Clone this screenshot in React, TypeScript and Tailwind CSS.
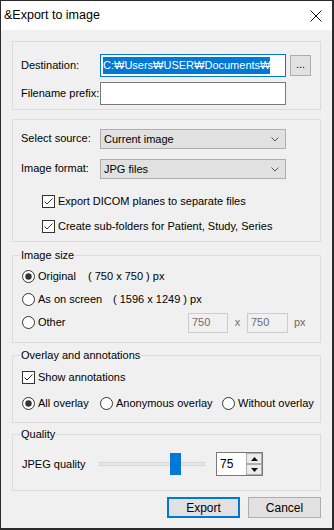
import type { ReactNode } from "react";

const font = "font-['Liberation_Sans','Noto_Sans_CJK_KR',Arial,sans-serif]";

function GroupBox({
  title,
  className,
  children,
}: {
  title?: string;
  className: string;
  children: ReactNode;
}) {
  return (
    <div className={`relative w-[309px] border border-[#dcdcdc] ${className}`}>
      {title && (
        <span className="absolute -top-[8px] left-[7px] bg-[#f0f0f0] px-px leading-[14px]">
          {title}
        </span>
      )}
      {children}
    </div>
  );
}

function Radio({ checked = false }: { checked?: boolean }) {
  return (
    <svg width="13" height="13" viewBox="0 0 13 13" className="shrink-0">
      <circle cx="6.5" cy="6.5" r="6" fill="#fff" stroke="#333" strokeWidth="1" />
      {checked && <circle cx="6.5" cy="6.5" r="3.2" fill="#333" />}
    </svg>
  );
}

function Check() {
  return (
    <svg width="13" height="13" viewBox="0 0 13 13" className="shrink-0">
      <rect x="0.5" y="0.5" width="12" height="12" fill="#fff" stroke="#333" />
      <polyline points="2.5,6.5 5,9 10.5,3.5" fill="none" stroke="#333" strokeWidth="1" />
    </svg>
  );
}

function Combo({ value }: { value: string }) {
  return (
    <div className="flex h-[20px] w-[186px] items-center justify-between border border-[#adadad] bg-[#e1e1e1] pl-[3px] pr-[6px]">
      <span>{value}</span>
      <svg width="8" height="5" viewBox="0 0 8 5">
        <polyline points="0.5,0.5 4,4 7.5,0.5" fill="none" stroke="#555" strokeWidth="1" />
      </svg>
    </div>
  );
}

function Button({ label, primary = false }: { label: string; primary?: boolean }) {
  return (
    <button
      className={`flex h-[21px] w-[73px] items-center justify-center bg-[#e1e1e1] ${
        primary ? "border-2 border-[#0078d7]" : "border border-[#adadad]"
      }`}
    >
      {label}
    </button>
  );
}

export default function App() {
  return (
    <div
      className={`flex h-[530px] w-[334px] flex-col border-t border-l border-r-2 border-b-2 border-[#2b2b2b] bg-[#f0f0f0] text-[11px] text-black ${font}`}
    >
      {/* title bar */}
      <div className="flex h-[29px] shrink-0 items-center justify-between bg-white pl-[3px] pr-[10px]">
        <span className="text-[12.5px]">&amp;Export to image</span>
        <svg width="12" height="12" viewBox="0 0 12 12">
          <path d="M0.5 0.5 L11.5 11.5 M11.5 0.5 L0.5 11.5" stroke="#111" strokeWidth="1" />
        </svg>
      </div>

      <div className="ml-[11px] flex flex-col">
        {/* destination */}
        <GroupBox className="mt-[11px] pt-[12px] pb-[4px] pl-[8px]">
          <div className="flex h-[23px] items-center">
            <span className="w-[79px]">Destination:</span>
            <div className="flex h-[23px] w-[186px] items-center border border-[#0078d7] bg-white pl-[2px]">
              <span className="bg-[#0078d7] leading-[17px] text-white">C:₩Users₩USER₩Documents₩</span>
            </div>
            <div className="ml-[4px] flex h-[21px] w-[21px] items-center justify-center border border-[#adadad] bg-[#e1e1e1] pb-[3px] leading-none">
              ...
            </div>
          </div>
          <div className="mt-[5px] flex h-[23px] items-center">
            <span className="w-[79px]">Filename prefix:</span>
            <div className="h-[23px] w-[186px] border border-[#7a7a7a] bg-white" />
          </div>
        </GroupBox>

        {/* source / format */}
        <GroupBox className="mt-[9px] pt-[9px] pb-[6px] pl-[8px]">
          <div className="flex h-[20px] items-center">
            <span className="w-[79px] -mt-px">Select source:</span>
            <Combo value="Current image" />
          </div>
          <div className="mt-[10px] flex h-[20px] items-center">
            <span className="w-[79px] -mt-px">Image format:</span>
            <Combo value="JPG files" />
          </div>
          <div className="mt-[14px] ml-[21px] flex h-[17px] items-center gap-[3px]">
            <Check />
            <span>Export DICOM planes to separate files</span>
          </div>
          <div className="mt-[8px] ml-[21px] flex h-[17px] items-center gap-[3px]">
            <Check />
            <span>Create sub-folders for Patient, Study, Series</span>
          </div>
        </GroupBox>

        {/* image size */}
        <GroupBox title="Image size" className="mt-[13px] pt-[9px] pb-[8px] pl-[9px]">
          <div className="flex h-[23px] items-center">
            <Radio checked />
            <span className="ml-[3px] w-[50px]">Original</span>
            <span>( 750 x 750 ) px</span>
          </div>
          <div className="flex h-[23px] items-center">
            <Radio />
            <span className="ml-[3px] w-[75px]">As on screen</span>
            <span>( 1596 x 1249 ) px</span>
          </div>
          <div className="flex h-[23px] items-center">
            <Radio />
            <span className="ml-[3px] w-[150px]">Other</span>
            <div className="flex h-[20px] w-[40px] items-center border border-[#cccccc] pl-[3px] text-[#6d6d6d]">
              750
            </div>
            <span className="w-[19px] text-center text-[#6d6d6d]">x</span>
            <div className="flex h-[20px] w-[41px] items-center border border-[#cccccc] pl-[3px] text-[#6d6d6d]">
              750
            </div>
            <span className="ml-[6px] text-[#6d6d6d]">px</span>
          </div>
        </GroupBox>

        {/* overlay */}
        <GroupBox title="Overlay and annotations" className="mt-[12px] pt-[10px] pb-[7px] pl-[9px]">
          <div className="flex h-[23px] items-center gap-[3px]">
            <Check />
            <span>Show annotations</span>
          </div>
          <div className="mt-[3px] flex h-[23px] items-center">
            <Radio checked />
            <span className="ml-[3px] w-[62px]">All overlay</span>
            <Radio />
            <span className="ml-[3px] w-[106px]">Anonymous overlay</span>
            <Radio />
            <span className="ml-[3px]">Without overlay</span>
          </div>
        </GroupBox>

        {/* quality */}
        <GroupBox title="Quality" className="mt-[11px] pt-[17px] pb-[14px] pl-[9px]">
          <div className="flex h-[24px] items-center">
            <span className="w-[77px]">JPEG quality</span>
            <div className="relative flex h-[24px] w-[106px] items-center">
              <div className="h-[4px] w-full border border-[#d6d6d6] bg-[#e7e7e7]" />
              <div className="absolute top-[1px] left-[71px] h-[22px] w-[11px] bg-[#0078d7]" />
            </div>
            <div className="ml-[11px] flex h-[24px]">
              <div className="flex w-[30px] items-center border border-r-0 border-[#7a7a7a] bg-white pl-[3px] text-[12px]">
                75
              </div>
              <div className="flex w-[17px] flex-col border-y border-r border-[#7a7a7a]">
                <div className="flex flex-1 items-center justify-center border border-[#adadad] bg-[#ececec]">
                  <svg width="7" height="4" viewBox="0 0 7 4">
                    <polygon points="3.5,0 7,4 0,4" fill="#111" />
                  </svg>
                </div>
                <div className="flex flex-1 items-center justify-center border border-[#adadad] bg-[#ececec]">
                  <svg width="7" height="4" viewBox="0 0 7 4">
                    <polygon points="0,0 7,0 3.5,4" fill="#111" />
                  </svg>
                </div>
              </div>
            </div>
          </div>
        </GroupBox>

        <div className="mt-[6px] flex w-[309px] justify-end gap-[8px] text-[12px]">
          <Button label="Export" primary />
          <Button label="Cancel" />
        </div>
      </div>
    </div>
  );
}
